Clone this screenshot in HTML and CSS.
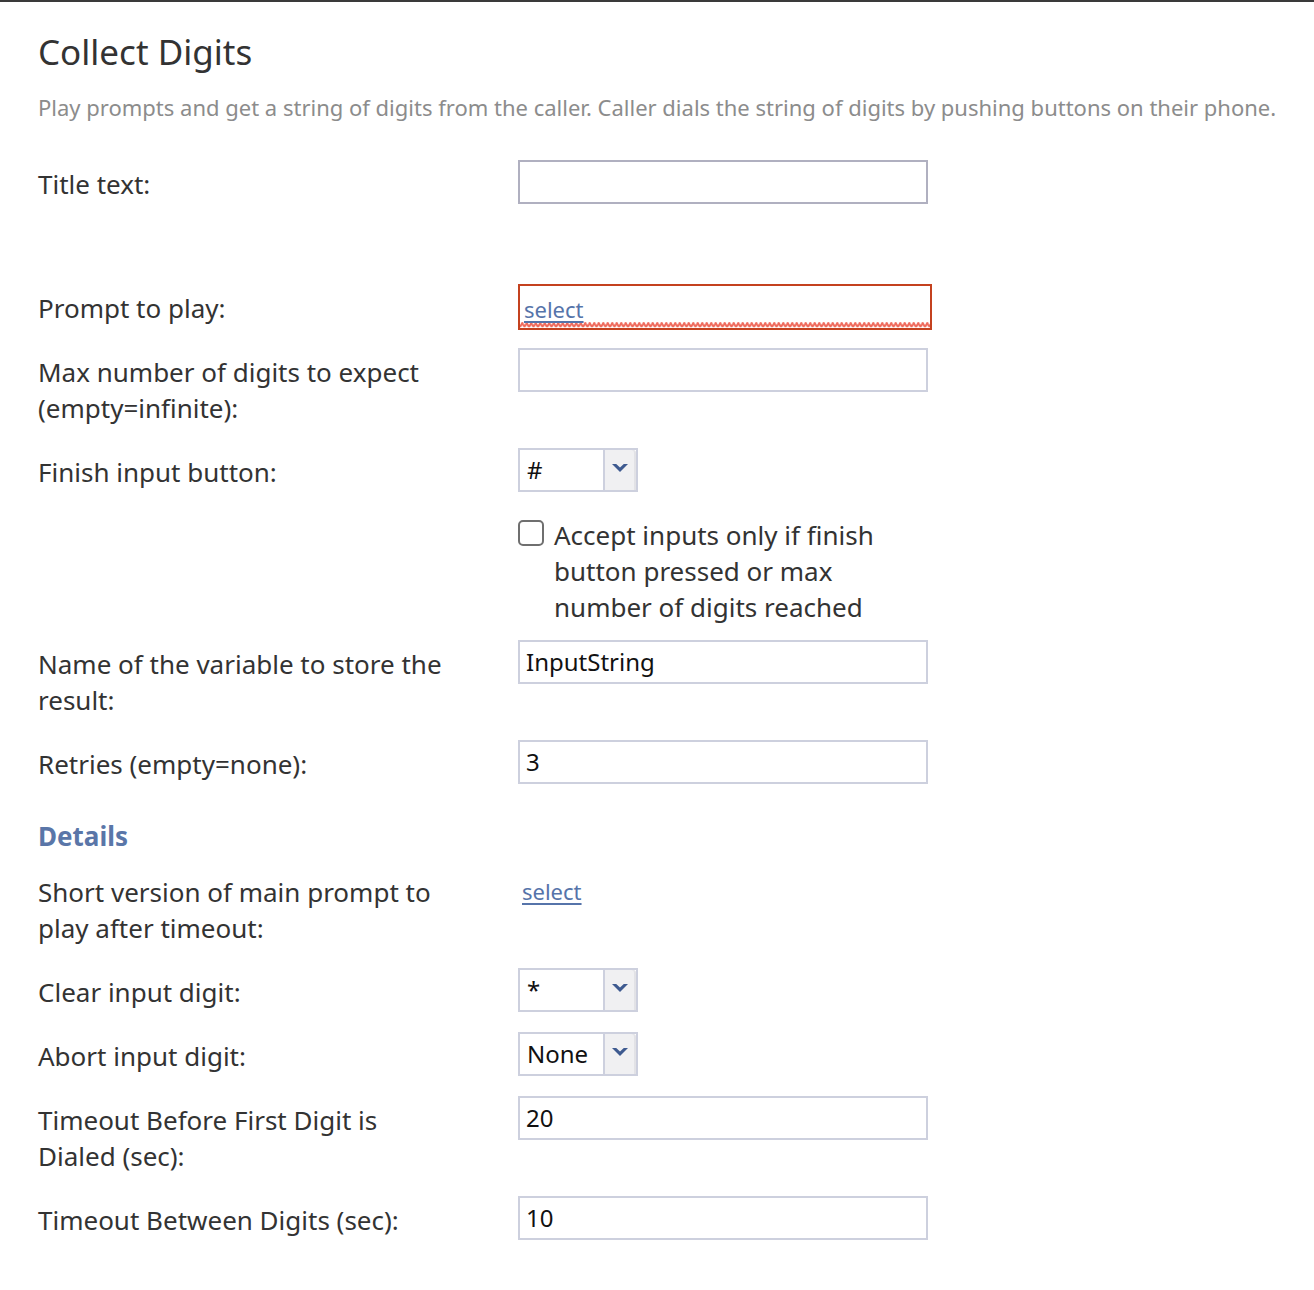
FILE: index.html
```html
<!DOCTYPE html>
<html>
<head>
<meta charset="utf-8">
<link rel="stylesheet" href="styles.css">
</head>
<body>
<div class="page">
  <h1 class="title">Collect Digits</h1>
  <p class="desc">Play prompts and get a string of digits from the caller. Caller dials the string of digits by pushing buttons on their phone.</p>
  <div class="form">
    <div class="row row-title">
      <div class="label">Title text:</div>
      <div class="control"><div class="input input-dark"></div></div>
    </div>
    <div class="row">
      <div class="label">Prompt to play:</div>
      <div class="control">
        <div class="prompt">
          <svg class="squiggle" width="410" height="6" viewBox="0 0 410 6" preserveAspectRatio="none">
            <defs>
              <pattern id="zz" width="4.5" height="6" patternUnits="userSpaceOnUse">
                <path d="M0 5 L2.25 1 L4.5 5" fill="none" stroke="#ef6a5c" stroke-width="2"/>
              </pattern>
            </defs>
            <rect width="410" height="6" fill="url(#zz)"/>
          </svg>
          <a class="link link-prompt" href="#">select</a>
        </div>
      </div>
    </div>
    <div class="row">
      <div class="label">Max number of digits to expect<br>(empty=infinite):</div>
      <div class="control"><div class="input"></div></div>
    </div>
    <div class="row">
      <div class="label">Finish input button:</div>
      <div class="control">
        <div class="select"><span class="select-val">#</span><span class="select-btn"><svg class="chev" width="16" height="8" viewBox="0 0 16 8"><path d="M0 0 L4.2 0 L8 3.4 L11.8 0 L16 0 L8 8 Z" fill="#3e5a90"/></svg></span></div>
      </div>
    </div>
    <div class="row row-check">
      <div class="label"></div>
      <div class="control check-wrap">
        <span class="checkbox"></span>
        <span class="check-text">Accept inputs only if finish<br>button pressed or max<br>number of digits reached</span>
      </div>
    </div>
    <div class="row">
      <div class="label">Name of the variable to store the<br>result:</div>
      <div class="control"><div class="input">InputString</div></div>
    </div>
    <div class="row">
      <div class="label">Retries (empty=none):</div>
      <div class="control"><div class="input">3</div></div>
    </div>
    <h2 class="section">Details</h2>
    <div class="row">
      <div class="label">Short version of main prompt to<br>play after timeout:</div>
      <div class="control"><a class="link link-plain" href="#">select</a></div>
    </div>
    <div class="row">
      <div class="label">Clear input digit:</div>
      <div class="control">
        <div class="select"><span class="select-val">*</span><span class="select-btn"><svg class="chev" width="16" height="8" viewBox="0 0 16 8"><path d="M0 0 L4.2 0 L8 3.4 L11.8 0 L16 0 L8 8 Z" fill="#3e5a90"/></svg></span></div>
      </div>
    </div>
    <div class="row">
      <div class="label">Abort input digit:</div>
      <div class="control">
        <div class="select"><span class="select-val">None</span><span class="select-btn"><svg class="chev" width="16" height="8" viewBox="0 0 16 8"><path d="M0 0 L4.2 0 L8 3.4 L11.8 0 L16 0 L8 8 Z" fill="#3e5a90"/></svg></span></div>
      </div>
    </div>
    <div class="row">
      <div class="label">Timeout Before First Digit is<br>Dialed (sec):</div>
      <div class="control"><div class="input">20</div></div>
    </div>
    <div class="row">
      <div class="label">Timeout Between Digits (sec):</div>
      <div class="control"><div class="input">10</div></div>
    </div>
  </div>
</div>
</body>
</html>
```

FILE: styles.css
```css
html, body {
  margin: 0;
  padding: 0;
  background: #ffffff;
}
body {
  font-family: "Noto Sans", "Open Sans", sans-serif;
  color: #333333;
  border-top: 2px solid #3a3a3a;
}
.page {
  padding: 0 0 40px 38px;
}
.title {
  margin: 0;
  padding-top: 28px;
  font-size: 35px;
  font-weight: 400;
  line-height: 44px;
  color: #333333;
}
.desc {
  margin: 0;
  padding-top: 19px;
  padding-bottom: 1px;
  font-size: 22px;
  line-height: 28px;
  color: #8c8c8c;
  height: 66px;
  white-space: nowrap;
}
.form {
  display: flex;
  flex-direction: column;
}
.row {
  display: flex;
  align-items: flex-start;
  margin-bottom: 20px;
}
.row-title {
  margin-bottom: 80px;
}
.label {
  width: 480px;
  flex: none;
  font-size: 26px;
  line-height: 36px;
  padding-top: 6px;
  padding-bottom: 2px;
  color: #333333;
}
.control {
  flex: none;
}
.input {
  box-sizing: border-box;
  width: 410px;
  height: 44px;
  border: 2px solid #cdd0de;
  background: #ffffff;
  font-size: 24px;
  line-height: 40px;
  padding-left: 6px;
  color: #111111;
}
.input-dark {
  border-color: #b0b0c0;
}
.prompt {
  position: relative;
  box-sizing: border-box;
  width: 414px;
  height: 46px;
  margin-bottom: -2px;
  border: 2px solid #c4411f;
  padding-left: 4px;
  padding-top: 5px;
  line-height: 36px;
}
.link {
  position: relative;
  font-size: 22px;
  color: #5674aa;
  text-decoration: underline;
  text-underline-offset: 3px;
}
.link-plain {
  display: inline-block;
  margin-left: 4px;
  line-height: 36px;
  padding-top: 5px;
}
.squiggle {
  position: absolute;
  left: 0;
  bottom: 0;
  width: 100%;
  height: 6px;
  display: block;
}
.select {
  box-sizing: border-box;
  width: 120px;
  height: 44px;
  border: 2px solid #cdd0de;
  display: flex;
  background: #ffffff;
}
.select-val {
  flex: 1;
  font-size: 24px;
  line-height: 40px;
  padding-left: 7px;
  color: #111111;
}
.select-btn {
  width: 33px;
  flex: none;
  border-left: 2px solid #cdd0de;
  border-top-right-radius: 3px;
  background: #f0f0f2;
  box-shadow: inset -2px 0 0 #e2e2e6;
  display: flex;
  align-items: flex-start;
  justify-content: center;
  padding-top: 14px;
  padding-right: 2px;
  box-sizing: border-box;
}
.chev {
  display: block;
}
.row-check {
  margin-top: 8px;
  margin-bottom: 15px;
}
.row-check .label {
  padding: 0;
  height: 1px;
}
.check-wrap {
  display: flex;
  align-items: flex-start;
  margin-top: -3px;
}
.checkbox {
  box-sizing: border-box;
  width: 26px;
  height: 26px;
  border: 2px solid #6f6f6f;
  border-radius: 5px;
  margin-top: 3px;
  margin-right: 10px;
  flex: none;
  background: #fff;
}
.check-text {
  font-size: 26px;
  line-height: 36px;
  color: #333333;
}
.section {
  margin: 0;
  padding: 14px 0;
  font-size: 26px;
  font-weight: 700;
  line-height: 36px;
  color: #5a76a8;
}
```
